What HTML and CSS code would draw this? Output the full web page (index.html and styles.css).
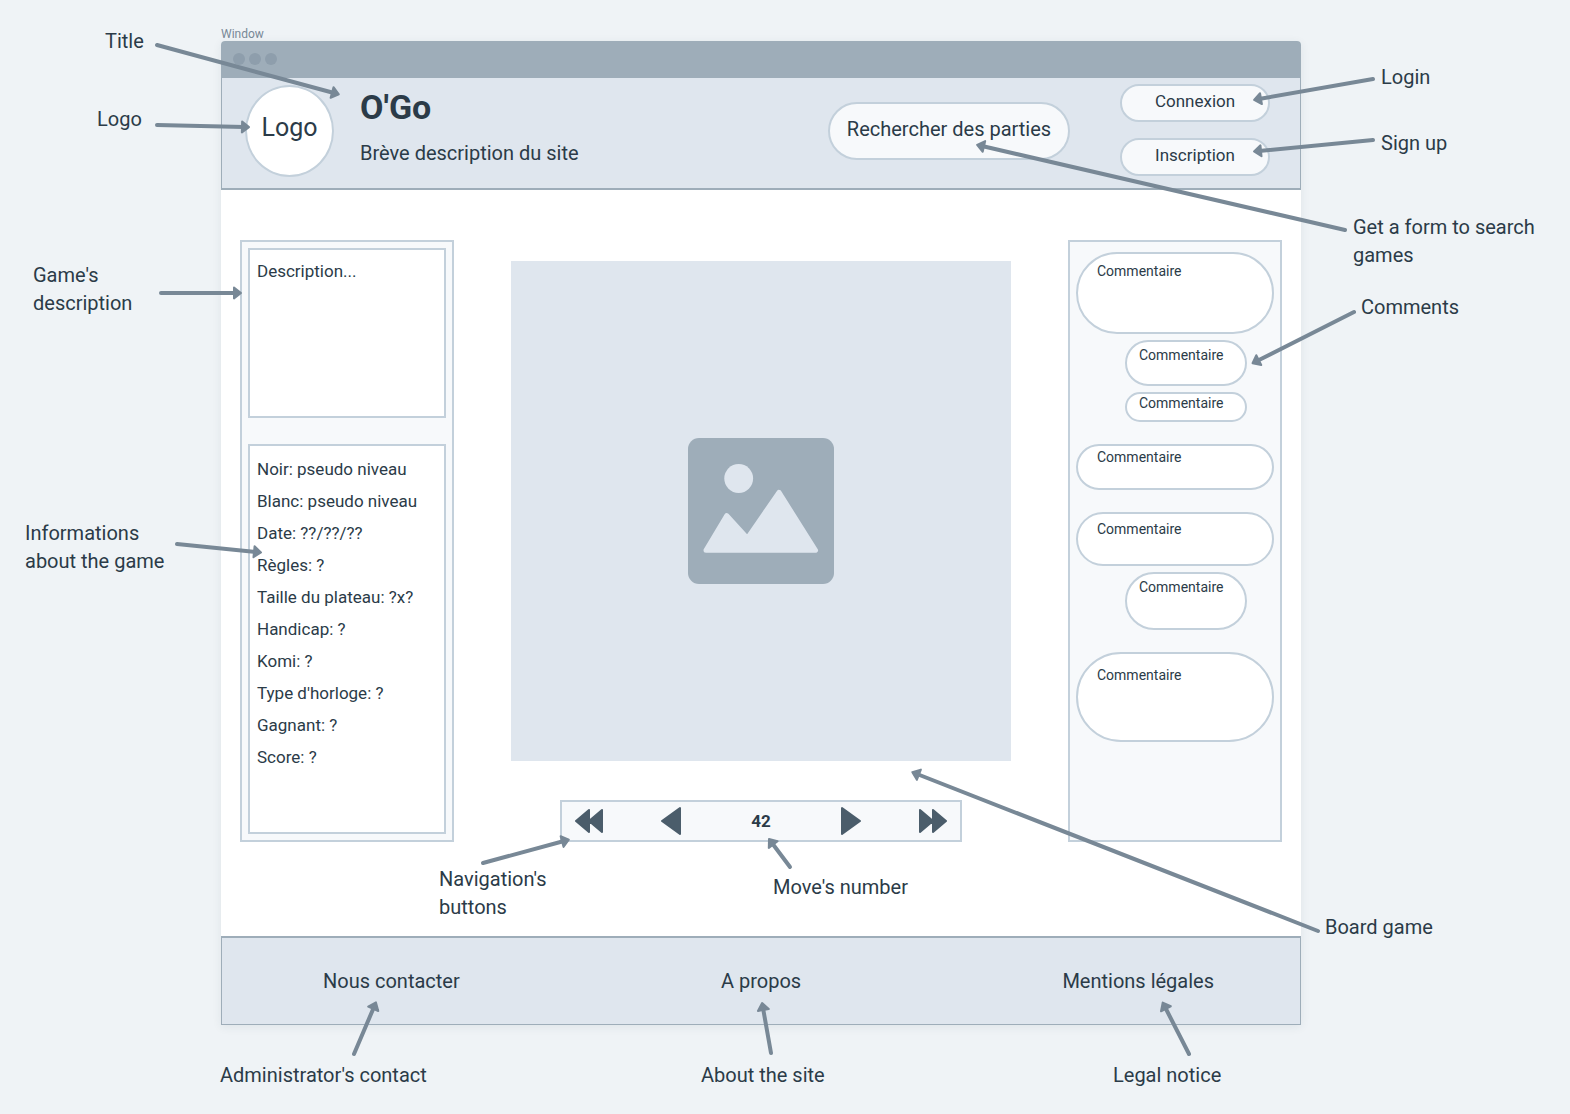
FILE: index.html
```html
<!DOCTYPE html>
<html lang="fr">
<head>
<meta charset="utf-8">
<meta name="viewport" content="width=device-width, initial-scale=1">
<title>O'Go</title>
<link rel="stylesheet" href="styles.css">
</head>
<body>
<div class="canvas">
  <p class="window-label">Window</p>
  <div class="window">
    <div class="titlebar"><span class="dot"></span><span class="dot"></span><span class="dot"></span></div>

    <header class="header">
      <div class="logo">Logo</div>
      <div class="brand">
        <h1 class="brand-name">O'Go</h1>
        <p class="brand-text">Brève description du site</p>
      </div>
      <button class="pill search" type="button">Rechercher des parties</button>
      <div class="auth">
        <button class="pill auth-button" type="button">Connexion</button>
        <button class="pill auth-button" type="button">Inscription</button>
      </div>
    </header>

    <main class="main">
      <section class="panel game">
        <p class="box description">Description...</p>
        <ul class="box infos">
          <li>Noir: pseudo niveau</li>
          <li>Blanc: pseudo niveau</li>
          <li>Date: ??/??/??</li>
          <li>Règles: ?</li>
          <li>Taille du plateau: ?x?</li>
          <li>Handicap: ?</li>
          <li>Komi: ?</li>
          <li>Type d'horloge: ?</li>
          <li>Gagnant: ?</li>
          <li>Score: ?</li>
        </ul>
      </section>

      <section class="play">
        <div class="board">
          <svg class="picture" viewBox="0 0 146 146" aria-hidden="true">
            <rect width="146" height="146" rx="11" fill="#9eadb9"/>
            <circle cx="50.7" cy="40.5" r="14.4" fill="#dfe6ee"/>
            <path d="M18 112.3 L38.8 77.6 L59.3 100.3 L91 54.4 L127.5 112.3 Z" fill="#dfe6ee" stroke="#dfe6ee" stroke-width="5" stroke-linejoin="round"/>
          </svg>
        </div>
        <nav class="moves">
          <button class="move-button" type="button" aria-label="Premier coup">
            <svg width="28" height="26" viewBox="0 0 28 26"><path d="M1 13 L14 2 V24 Z M14 13 L27 2 V24 Z"/></svg>
          </button>
          <button class="move-button" type="button" aria-label="Coup précédent">
            <svg width="20" height="30" viewBox="0 0 20 30"><path d="M1 15 L19 2 V28 Z"/></svg>
          </button>
          <output class="move-number">42</output>
          <button class="move-button" type="button" aria-label="Coup suivant">
            <svg width="20" height="30" viewBox="0 0 20 30"><path d="M19 15 L1 2 V28 Z"/></svg>
          </button>
          <button class="move-button" type="button" aria-label="Dernier coup">
            <svg width="28" height="26" viewBox="0 0 28 26"><path d="M27 13 L14 2 V24 Z M14 13 L1 2 V24 Z"/></svg>
          </button>
        </nav>
      </section>

      <section class="panel comments">
        <div class="thread">
          <p class="comment large">Commentaire</p>
          <p class="comment reply medium">Commentaire</p>
          <p class="comment reply tiny">Commentaire</p>
        </div>
        <div class="thread">
          <p class="comment small">Commentaire</p>
        </div>
        <div class="thread">
          <p class="comment roomy">Commentaire</p>
          <p class="comment reply tall">Commentaire</p>
        </div>
        <div class="thread">
          <p class="comment huge">Commentaire</p>
        </div>
      </section>
    </main>

    <footer class="footer">
      <a href="#contact">Nous contacter</a>
      <a href="#apropos">A propos</a>
      <a href="#mentions">Mentions légales</a>
    </footer>
  </div>

  <div class="notes notes-left">
    <svg class="arrows" viewBox="0 0 460 1114" width="460" height="1114" aria-hidden="true">
      <defs>
        <marker id="head" markerUnits="userSpaceOnUse" markerWidth="16" markerHeight="16" refX="5" refY="8" orient="auto" overflow="visible">
          <path d="M3 2.5 L10 8 L3 13.5 Z"/>
        </marker>
      </defs>
      <path d="M157 45 L334 93"/>
      <path d="M157 125 L244 127"/>
      <path d="M161 293 L236 293"/>
      <path d="M177 544 L256 552"/>
      <path d="M354 1054 L374 1007"/>
    </svg>
    <p class="note n-title">Title</p>
    <p class="note n-logo">Logo</p>
    <p class="note n-description">Game's<br>description</p>
    <p class="note n-infos">Informations<br>about the game</p>
    <p class="note n-contact">Administrator's contact</p>
  </div>

  <div class="notes notes-center">
    <svg class="arrows" viewBox="411 0 700 1114" width="700" height="1114" aria-hidden="true">
      <path d="M483 863 L564 841"/>
      <path d="M790 867 L772 843"/>
      <path d="M771 1053 L763 1008"/>
    </svg>
    <p class="note n-buttons">Navigation's<br>buttons</p>
    <p class="note n-number">Move's number</p>
    <p class="note n-about">About the site</p>
  </div>

  <div class="notes notes-right">
    <svg class="arrows" viewBox="900 0 670 1114" width="670" height="1114" aria-hidden="true">
      <path d="M1373 79 L1259 99"/>
      <path d="M1373 140 L1259 151"/>
      <path d="M1345 230 L982 146"/>
      <path d="M1354 312 L1257 361"/>
      <path d="M1318 931 L917 774"/>
      <path d="M1189 1054 L1165 1007"/>
    </svg>
    <p class="note n-login">Login</p>
    <p class="note n-signup">Sign up</p>
    <p class="note n-search">Get a form to search<br>games</p>
    <p class="note n-comments">Comments</p>
    <p class="note n-board">Board game</p>
    <p class="note n-legal">Legal notice</p>
  </div>
</div>
</body>
</html>
```
FILE: styles.css
```css
* { box-sizing: border-box; }

body {
  margin: 0;
  background: #eff3f6;
  color: #2b3b48;
  font-family: Roboto, "Liberation Sans", sans-serif;
  font-size: 20px;
  line-height: 28px;
}

p, h1, ul { margin: 0; padding: 0; }
ul { list-style: none; }
button { font-family: inherit; color: inherit; }

.canvas {
  position: relative;
  min-height: 100vh;
  padding: 27px 269px 89px 221px;
}

.window-label { font-size: 12px; line-height: 14px; color: #788896; }

.window {
  background: #fff;
  border-radius: 4px 4px 0 0;
  box-shadow: 0 2px 10px rgba(43, 59, 72, 0.08);
}

.titlebar {
  display: flex;
  align-items: center;
  gap: 4px;
  height: 37px;
  padding: 0 12px 2px;
  background: #9eadb9;
  border-radius: 4px 4px 0 0;
}
.dot { width: 12px; height: 12px; border-radius: 50%; background: #8e9eac; }

/* Header */
.header {
  display: flex;
  align-items: center;
  height: 112px;
  padding: 0 30px 4px 23px;
  background: #dfe6ee;
  border: solid #9eadb9;
  border-width: 0 1px 2px;
}
.logo {
  display: flex;
  align-items: center;
  justify-content: center;
  width: 89px;
  height: 92px;
  padding-bottom: 6px;
  background: #fff;
  border: 2px solid #c3d0db;
  border-radius: 50%;
  font-size: 25px;
}
.brand { margin: 0 auto 8px 26px; }
.brand-name { margin-bottom: 12px; font-size: 34px; line-height: 40px; }
.pill {
  padding: 0 0 4px;
  background: #f7f9fb;
  border: 2px solid #c3d0db;
  border-radius: 29px;
}
.search { width: 242px; height: 58px; font-size: 20px; }
.auth { display: flex; flex-direction: column; gap: 16px; margin: 0 0 2px 50px; }
.auth-button { width: 150px; height: 38px; font-size: 17px; }

/* Main area */
.main {
  display: flex;
  justify-content: space-between;
  gap: 20px;
  padding: 50px 19px 94px;
}
.panel {
  display: flex;
  flex-direction: column;
  flex: 0 0 214px;
  background: #f7f9fb;
  border: 2px solid #c3d0db;
}
.game { gap: 26px; padding: 6px; font-size: 17px; }
.box { padding: 7px; background: #fff; border: 2px solid #c3d0db; }
.description { height: 170px; }
.infos { flex: 1; min-height: 390px; line-height: 32px; }

.play {
  display: flex;
  flex-direction: column;
  align-items: center;
  flex: 0 1 500px;
  gap: 39px;
  padding-top: 21px;
}
.board {
  display: flex;
  align-items: center;
  justify-content: center;
  width: 100%;
  aspect-ratio: 1;
  background: #dfe6ee;
}
.picture { width: 146px; height: 146px; }
.moves {
  display: flex;
  align-items: center;
  justify-content: space-between;
  width: 80%;
  min-width: 402px;
  height: 42px;
  padding: 0 13px;
  background: #f7f9fb;
  border: 2px solid #c3d0db;
}
.move-button { display: flex; padding: 0; background: none; border: 0; }
.move-button path {
  fill: #4b5d6b;
  stroke: #4b5d6b;
  stroke-width: 2;
  stroke-linejoin: round;
}
.move-number { padding: 0 12px; font-size: 17px; font-weight: 700; }

/* Comments */
.comments { gap: 22px; padding: 10px 6px; }
.thread { display: flex; flex-direction: column; gap: 6px; }
.comment {
  padding-left: 19px;
  background: #fff;
  border: 2px solid #c3d0db;
  border-radius: 45px;
  font-size: 14px;
  line-height: 16px;
}
.reply { width: 122px; margin-left: 49px; padding-left: 12px; }
.tiny { height: 30px; padding-top: 1px; }
.small { height: 46px; padding-top: 3px; }
.medium { height: 46px; padding-top: 5px; }
.roomy { height: 54px; padding-top: 7px; }
.tall { height: 58px; padding-top: 5px; }
.large { height: 82px; padding-top: 9px; }
.huge { height: 90px; padding-top: 13px; }

/* Footer */
.footer {
  display: flex;
  align-items: center;
  justify-content: space-between;
  height: 89px;
  padding: 0 86px 0 101px;
  background: #dfe6ee;
  border: 1px solid #9eadb9;
  border-top-width: 2px;
}
.footer a { color: inherit; text-decoration: none; }

/* Annotations pinned over the mockup */
.notes { position: absolute; top: 0; height: 1114px; pointer-events: none; }
.notes-left { left: 0; width: 460px; }
.notes-center { left: calc(50% - 374px); width: 700px; }
.notes-right { right: 0; width: 670px; }

.arrows { display: block; stroke: #788896; fill: none; stroke-width: 4; stroke-linecap: round; }
.arrows > path { marker-end: url(#head); }
#head path { fill: #788896; stroke: #788896; stroke-width: 2; stroke-linejoin: round; }

.note { position: absolute; white-space: nowrap; }
.n-title { left: 105px; top: 27px; }
.n-logo { left: 97px; top: 105px; }
.n-description { left: 33px; top: 261px; }
.n-infos { left: 25px; top: 519px; }
.n-contact { left: 220px; top: 1061px; }
.n-buttons { left: 28px; top: 865px; }
.n-number { left: 362px; top: 873px; }
.n-about { left: 290px; top: 1061px; }
.n-login { left: 481px; top: 63px; }
.n-signup { left: 481px; top: 129px; }
.n-search { left: 453px; top: 213px; }
.n-comments { left: 461px; top: 293px; }
.n-board { left: 425px; top: 913px; }
.n-legal { left: 213px; top: 1061px; }
```
